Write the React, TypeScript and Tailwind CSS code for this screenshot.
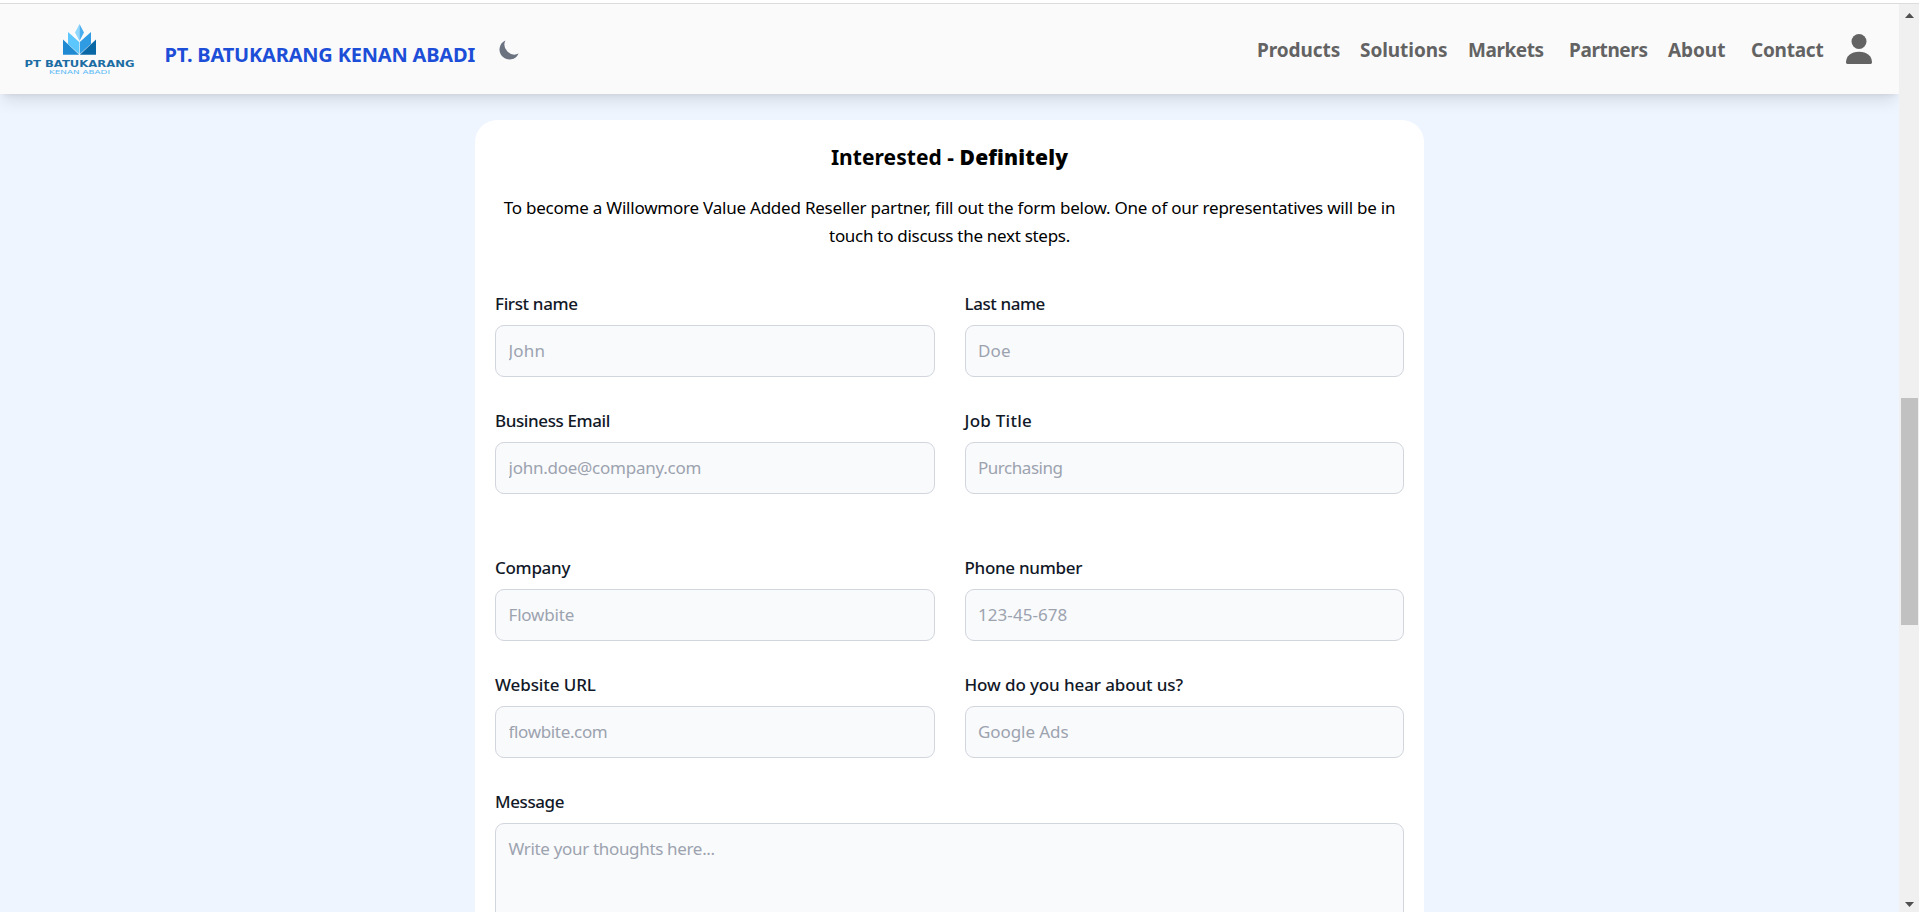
type FieldProps = {
  label: string;
  labelTracking: string;
  placeholder: string;
  tracking: string;
};

const navItems = [
  { label: 'Products', className: 'w-[103px] tracking-[-0.06px]' },
  { label: 'Solutions', className: 'w-[108px] tracking-[-0.06px]' },
  { label: 'Markets', className: 'w-[101px] tracking-[-0.45px]' },
  { label: 'Partners', className: 'w-[99px] tracking-[-0.38px]' },
  { label: 'About', className: 'w-[83px] tracking-[-0.06px]' },
  { label: 'Contact', className: 'w-[95px] tracking-[-0.24px]' },
];

const contactFields: FieldProps[] = [
  { label: 'First name', labelTracking: 'tracking-[-0.35px]', placeholder: 'John', tracking: 'tracking-[0.2px]' },
  { label: 'Last name', labelTracking: 'tracking-[-0.42px]', placeholder: 'Doe', tracking: 'tracking-[0.1px]' },
  { label: 'Business Email', labelTracking: 'tracking-[-0.4px]', placeholder: 'john.doe@company.com', tracking: 'tracking-[-0.25px]' },
  { label: 'Job Title', labelTracking: 'tracking-[0.25px]', placeholder: 'Purchasing', tracking: 'tracking-[-0.46px]' },
];

const companyFields: FieldProps[] = [
  { label: 'Company', labelTracking: 'tracking-[-0.3px]', placeholder: 'Flowbite', tracking: 'tracking-[-0.18px]' },
  { label: 'Phone number', labelTracking: 'tracking-[-0.3px]', placeholder: '123-45-678', tracking: 'tracking-[0.06px]' },
  { label: 'Website URL', labelTracking: 'tracking-[-0.1px]', placeholder: 'flowbite.com', tracking: 'tracking-[-0.34px]' },
  { label: 'How do you hear about us?', labelTracking: 'tracking-[-0.11px]', placeholder: 'Google Ads', tracking: 'tracking-[-0.08px]' },
];

function Logo() {
  return (
    <svg className="h-[54px] w-[112px] shrink-0" viewBox="24 22 112 54">
      <polygon points="79.5,24 75,32.5 79.5,41" fill="#8fd8ff" />
      <polygon points="79.5,24 84,32.5 79.5,41" fill="#4aaeee" />
      <polygon points="68,32 79.2,42 79.2,54 68,44" fill="#5cc6ff" />
      <polygon points="91,32 79.8,42 79.8,54 91,44" fill="#2f9be3" />
      <polygon points="63,39.5 79.2,54.8 63,54.8" fill="#1f8ad2" />
      <polygon points="96,39.5 96,54.8 79.8,54.8" fill="#0a67a6" />
      <text x="24.5" y="67.4" textLength="110" lengthAdjust="spacingAndGlyphs" fontFamily="DejaVu Sans, sans-serif" fontWeight="700" fontSize="9" fill="#1c6da3">
        PT BATUKARANG
      </text>
      <text x="49" y="74" textLength="61" lengthAdjust="spacingAndGlyphs" fontFamily="DejaVu Sans, sans-serif" fontSize="5.6" fill="#62bcf5">
        KENAN ABADI
      </text>
    </svg>
  );
}

function MoonIcon() {
  return (
    <svg className="ml-[22px] h-[25px] w-[25px]" viewBox="0 0 20 20" fill="#6b7280">
      <path d="M17.293 13.293A8 8 0 016.707 2.707a8.001 8.001 0 1010.586 10.586z" />
    </svg>
  );
}

function UserIcon() {
  return (
    <svg className="h-[30px] w-[26px]" viewBox="0 0 26 30" fill="#636363">
      <circle cx="13" cy="7.5" r="7.5" />
      <path d="M0 28.6C0 22 5 17.8 13 17.8S26 22 26 28.6Q26 30 24.6 30H1.4Q0 30 0 28.6Z" />
    </svg>
  );
}

function Header() {
  return (
    <header className="relative z-10 flex h-[90px] shrink-0 items-start justify-between bg-[#fafafa] shadow-lg">
      <div className="flex items-start pl-6">
        <div className="pt-[18px]">
          <Logo />
        </div>
        <span className="ml-[28.5px] mt-[37px] whitespace-nowrap text-[20px] font-bold leading-7 tracking-[-0.19px] text-[#1d4ed8]">
          PT. BATUKARANG KENAN ABADI
        </span>
        <button className="pt-[33px]" aria-label="Toggle theme">
          <MoonIcon />
        </button>
      </div>
      <nav className="flex items-start pr-[27px] text-[19px] font-bold leading-7 text-[#636363]">
        <div className="flex pt-8">
          {navItems.map((item) => (
            <a key={item.label} className={item.className}>
              {item.label}
            </a>
          ))}
        </div>
        <div className="pt-[30px]">
          <UserIcon />
        </div>
      </nav>
    </header>
  );
}

function Field({ label, labelTracking, placeholder, tracking }: FieldProps) {
  return (
    <div className="flex flex-col gap-[7px]">
      <label className={`h-7 leading-[27px] font-medium text-[#111827] ${labelTracking}`}>{label}</label>
      <input
        className={`h-[52px] w-full rounded-[9px] border border-gray-300 bg-[#f9fafc] px-[12.5px] pb-px placeholder:text-[#9ca3af] ${tracking}`}
        placeholder={placeholder}
      />
    </div>
  );
}

function Scrollbar() {
  return (
    <div className="flex w-5 shrink-0 flex-col items-center bg-[#f0f0f0] pt-[9px] pb-[5px]">
      <svg className="h-[5px] w-[9px]" viewBox="0 0 9 5" fill="#505050">
        <path d="M4.5 0L9 5H0Z" />
      </svg>
      <div className="mt-[380px] h-[227px] w-[17px] bg-[#c1c1c1]" />
      <svg className="mt-auto h-[5px] w-[9px]" viewBox="0 0 9 5" fill="#505050">
        <path d="M0 0H9L4.5 5Z" />
      </svg>
    </div>
  );
}

export default function App() {
  return (
    <div className="flex h-[912px] w-[1919px] flex-col overflow-hidden bg-white pt-[3px] font-['Noto_Sans',sans-serif] text-[17px] text-black">
      <div className="h-px shrink-0 bg-[#dcdcdc]" />
      <div className="flex h-[908px]">
        <div className="flex min-w-0 grow flex-col overflow-hidden bg-[#eef5ff]">
          <Header />
          <main className="mx-auto mt-[26px] w-[949px] shrink-0 rounded-t-[22px] bg-white px-5 pt-[22px]">
            <h2 className="text-center text-[21px] font-bold leading-[30px] tracking-[0.05px]">
              Interested - <span className="font-black tracking-[0.15px]">Definitely</span>
            </h2>
            <p className="mt-[22px] text-center leading-7 tracking-[-0.223px]">
              To become a Willowmore Value Added Reseller partner, fill out the form below. One of our representatives will be in
              <br />
              <span className="tracking-[-0.29px]">touch to discuss the next steps.</span>
            </p>
            <form className="mt-[40px]">
              <div className="grid grid-cols-2 gap-[30px]">
                {contactFields.map((field) => (
                  <Field key={field.label} {...field} />
                ))}
              </div>
              <div className="mt-[60px] grid grid-cols-2 gap-[30px]">
                {companyFields.map((field) => (
                  <Field key={field.label} {...field} />
                ))}
              </div>
              <div className="mt-[30px] flex flex-col gap-[7px]">
                <label className="h-7 font-medium leading-[27px] tracking-[-0.4px] text-[#111827]">Message</label>
                <textarea
                  className="h-[180px] w-full resize-none rounded-[9px] border border-gray-300 bg-[#f9fafc] px-[12.5px] py-[11px] leading-7 tracking-[-0.33px] placeholder:text-[#9ca3af]"
                  placeholder="Write your thoughts here..."
                />
              </div>
            </form>
          </main>
        </div>
        <Scrollbar />
      </div>
    </div>
  );
}
